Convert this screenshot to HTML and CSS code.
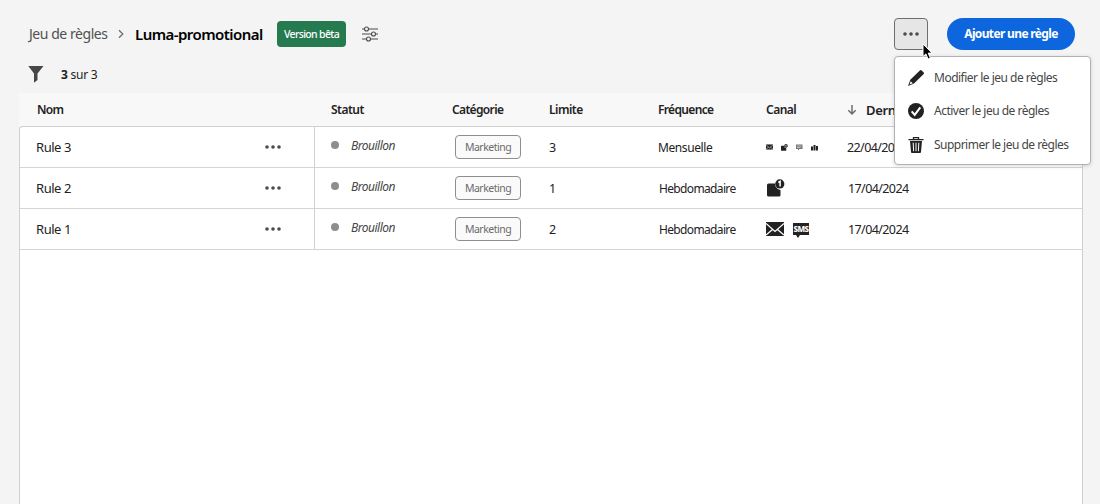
FILE: index.html
```html
<!DOCTYPE html>
<html lang="fr">
<head>
<meta charset="utf-8">
<title>Luma-promotional</title>
<link rel="stylesheet" href="styles.css">
</head>
<body>
<svg class="defs" width="0" height="0">
  <symbol id="dots" viewBox="0 0 16 4"><circle cx="2" cy="2" r="1.8"/><circle cx="8" cy="2" r="1.8"/><circle cx="14" cy="2" r="1.8"/></symbol>
  <symbol id="mail" viewBox="0 0 18 14"><path d="M0 0h18v14H0z"/><path d="M0 1.500 9 9.500 18 1.500M0 13l6.500-5.600M18 13l-6.500-5.600" fill="none" stroke="#fff" stroke-width="1.300"/></symbol>
  <symbol id="push" viewBox="0 0 18 18"><path d="M1.500 4.500H8a6.200 6.200 0 0 0 5.500 6.500V16a1.500 1.500 0 0 1-1.500 1.500H1.500A1.500 1.500 0 0 1 0 16V6a1.500 1.500 0 0 1 1.500-1.500z"/><circle cx="12.800" cy="4.900" r="4.600"/><path d="M11.300 3.500 13.100 2.400V7.600" fill="none" stroke="#fff" stroke-width="1.500"/></symbol>
</svg>
<header class="topbar">
  <nav class="crumbs">
    <a class="crumb">Jeu de règles</a>
    <svg class="chevron" width="6" height="10" viewBox="0 0 6 10"><path d="M1 1.200 4.800 5 1 8.800"/></svg>
    <h1 class="title">Luma-promotional</h1>
  </nav>
  <span class="beta">Version bêta</span>
  <svg class="settings" width="16" height="16" viewBox="0 0 16 16"><path d="M0 3h2.500M6.500 3H16M0 8h9.500M13.500 8H16M0 13h4.500M8.500 13H16"/><circle cx="4.500" cy="3" r="2"/><circle cx="11.500" cy="8" r="2"/><circle cx="6.500" cy="13" r="2"/></svg>
  <button class="more"><svg width="16" height="4"><use href="#dots"/></svg></button>
  <button class="cta"><span>Ajouter une règle</span></button>
</header>
<div class="filters">
  <svg width="16" height="17" viewBox="0 0 16 17"><path d="M.3 0h15.200L9.500 7.500V14L6 16.800V7.500z"/></svg>
  <span class="count"><b>3</b> sur 3</span>
</div>
<main class="table">
  <div class="row head">
    <span class="name">Nom</span><span class="status">Statut</span><span class="h-cat">Catégorie</span><span class="h-lim">Limite</span><span class="h-freq">Fréquence</span><span class="h-canal">Canal</span>
    <span class="sort"><svg width="10" height="10" viewBox="0 0 10 10"><path d="M5 0v8.500M1.300 5.200 5 8.900 8.700 5.200"/></svg>Dernière</span>
  </div>
  <div class="body">
    <div class="row">
      <span class="name"><span>Rule 3</span><svg width="16" height="4"><use href="#dots"/></svg></span>
      <span class="status"><i></i><em>Brouillon</em></span>
      <span class="cat"><span class="tag">Marketing</span></span>
      <span class="limit">3</span><span class="freq month">Mensuelle</span>
      <span class="channels tiny">
        <svg width="7" height="6" viewBox="0 0 18 14"><use href="#mail"/></svg>
        <svg width="7" height="7" viewBox="0 0 18 18"><use href="#push"/></svg>
        <svg width="7" height="7" viewBox="0 0 14 14"><path d="M0 1h13v9H7l-3 3v-3H0z" fill="#777"/><path d="M2 4h9M2 7h7" stroke="#fff"/></svg>
        <svg width="7" height="7" viewBox="0 0 14 14"><path d="M0 5h4v8H0zM5 2h4v11H5zM10 4h4v9h-4z"/></svg>
      </span>
      <span class="date first">22/04/2024</span>
    </div>
    <div class="row">
      <span class="name"><span>Rule 2</span><svg width="16" height="4"><use href="#dots"/></svg></span>
      <span class="status"><i></i><em>Brouillon</em></span>
      <span class="cat"><span class="tag">Marketing</span></span>
      <span class="limit">1</span><span class="freq">Hebdomadaire</span>
      <span class="channels push"><svg width="18" height="18"><use href="#push"/></svg></span>
      <span class="date">17/04/2024</span>
    </div>
    <div class="row">
      <span class="name"><span>Rule 1</span><svg width="16" height="4"><use href="#dots"/></svg></span>
      <span class="status"><i></i><em>Brouillon</em></span>
      <span class="cat"><span class="tag">Marketing</span></span>
      <span class="limit">2</span><span class="freq">Hebdomadaire</span>
      <span class="channels"><svg width="18" height="14"><use href="#mail"/></svg><span class="sms">SMS</span></span>
      <span class="date">17/04/2024</span>
    </div>
  </div>
</main>
<div class="menu">
  <div class="item"><svg width="16" height="16" viewBox="0 0 16 16"><path d="M12.100.3a1 1 0 0 1 1.300 0l2.300 2.300a1 1 0 0 1 0 1.300L6 13.600 0 16l2.300-6.200z"/><path d="m2.700 11.200-1.200 3.300L4.800 13.300z" fill="#fff"/></svg><span class="m1">Modifier le jeu de règles</span></div>
  <div class="item"><svg width="16" height="16" viewBox="0 0 16 16"><circle cx="8" cy="8" r="8"/><path d="m3.700 8.300 3 3.500 5.600-7.400" fill="none" stroke="#fff" stroke-width="2"/></svg><span class="m2">Activer le jeu de règles</span></div>
  <div class="item"><svg width="16" height="16" viewBox="0 0 16 16"><path d="M5.500 2V.6h5V2M.5 2.600h15" fill="none" stroke="#222" stroke-width="1.300"/><path d="M2 4h12L13 15a1 1 0 0 1-1 1H4a1 1 0 0 1-1-1z"/><path d="m5.200 5.700.4 8.500M8 5.700v8.500M10.800 5.700l-.4 8.500" stroke="#fff"/></svg><span class="m3">Supprimer le jeu de règles</span></div>
</div>
<svg class="cursor" width="12" height="18" viewBox="0 0 12 18"><path d="M1 1v12.500l2.900-2.600 2.200 5.200 2.300-1-2.200-5H10z"/></svg>
</body>
</html>
```
FILE: styles.css
```css
* { box-sizing: border-box; }
body { margin: 0; width: 1100px; height: 504px; overflow: hidden; display: flex; flex-direction: column; position: relative; background: #f4f4f4; color: #222; font: 12px/18px "Noto Sans", sans-serif; white-space: nowrap; }
svg { flex: none; display: block; fill: #222; }
.defs { position: absolute; }
button { font: inherit; padding: 0; display: flex; align-items: center; justify-content: center; }
.topbar { height: 68px; flex: none; display: flex; align-items: center; padding: 0 25px 0 28px; }
.crumbs { display: flex; align-items: center; width: 249px; }
.crumb { width: 90px; padding-left: 1px; color: #505050; font-size: 14px; letter-spacing: -.45px; }
.chevron { fill: none; stroke: #6e6e6e; stroke-width: 1.3; }
.title { margin: 0 0 0 11px; color: #000; font-size: 15px; font-weight: 600; letter-spacing: -.55px; }
.beta { width: 69px; height: 26px; display: flex; align-items: center; justify-content: center; border-radius: 4px; background: #267a4f; color: #fff; font-size: 10.5px; font-weight: 500; letter-spacing: -.65px; }
.settings { margin-left: 16px; fill: none; stroke: #4b4b4b; stroke-width: 1.1; }
.more { width: 34px; height: 32px; margin-left: auto; background: #e6e6e6; border: 1px solid #6e6e6e; border-radius: 4px; }
.more svg, .name svg { fill: #4b4b4b; }
.cta { width: 128px; height: 32px; margin-left: 19px; border: 0; border-radius: 16px; background: #0d66de; color: #fff; font-weight: 700; letter-spacing: -.65px; }
.filters { height: 25px; flex: none; display: flex; align-items: flex-start; padding-left: 28px; }
.filters svg { margin-top: -2px; fill: #464646; }
.count { margin: -2px 0 0 17px; letter-spacing: -.25px; }
.table { flex: 1; width: 1064px; margin-left: 19px; display: flex; flex-direction: column; }
.row { display: grid; grid-template-columns: 295px 137px 97px 109px 108px 82px 1fr; align-items: center; height: 41px; border-bottom: 1px solid #d5d5d5; }
.head { height: 33px; padding-left: 1px; border: 0; background: #f8f8f8; font-weight: 600; font-size: 12px; letter-spacing: -.65px; }
.body { flex: 1; background: #fff; border: 1px solid #d0d0d0; border-bottom: 0; border-radius: 4px 4px 0 0; height: 378px; }
.row > span { height: 100%; display: flex; align-items: center; }
.name { padding-left: 16px; }
.head .name { padding-left: 17px; }
.body .name { justify-content: space-between; padding-right: 33px; border-right: 1px solid #d0d0d0; font-size: 13px; letter-spacing: -.45px; }
.status { padding-left: 16px; }
.head .status { letter-spacing: -.5px; }
.h-lim, .h-canal { letter-spacing: -.5px; }
.body .status { padding-bottom: 4px; }
.status i { width: 8px; height: 8px; margin-right: 12px; border-radius: 50%; background: #8e8e8e; }
.status em { padding-top: 1px; color: #464646; font-size: 12px; letter-spacing: -.5px; }
.head .sort { font-size: 13px; margin-left: -1px; letter-spacing: -.35px; }
.sort svg { margin-right: 9px; fill: none; stroke: #6e6e6e; stroke-width: 1.5; }
.cat { padding-left: 3px; }
.tag { width: 66px; height: 24px; display: flex; align-items: center; justify-content: center; border: 1px solid #8e8e8e; border-radius: 4px; background: #fafafa; color: #6b6b6b; font-size: 10.5px; letter-spacing: -.5px; }
.row > .limit, .row > .freq, .row > .date { padding-top: 2px; }
.limit { font-size: 12.5px; }
.freq { letter-spacing: -.65px; padding-left: 1px; }
.row > .month { padding-left: 0; letter-spacing: -.4px; }
.channels { gap: 9px; }
.tiny { gap: 8px; }
.push { padding-left: 1px; }
.sms { position: relative; width: 16px; height: 12px; background: #222; color: #fff; font-size: 8px; font-weight: 800; line-height: 11px; text-align: center; letter-spacing: -.5px; }
.sms::after { content: ""; position: absolute; left: 3px; top: 12px; border: 2px solid transparent; border-top: 3px solid #222; }
.date { font-size: 12.5px; letter-spacing: -.6px; }
.first { margin-left: -1px; }
.menu { position: absolute; left: 894px; top: 56px; width: 197px; height: 109px; padding: 4px 0 0 13px; background: #fff; border: 1px solid #b1b1b1; border-radius: 4px; box-shadow: 0 1px 4px rgba(0,0,0,.15); color: #464646; }
.item { display: flex; align-items: center; height: 33.500px; gap: 10px; }
.m1 { letter-spacing: -.5px; }
.m2 { letter-spacing: -.5px; }
.m3 { letter-spacing: -.52px; }
.cursor { position: absolute; left: 922px; top: 43px; fill: #000; stroke: #fff; stroke-width: 1; }
```
